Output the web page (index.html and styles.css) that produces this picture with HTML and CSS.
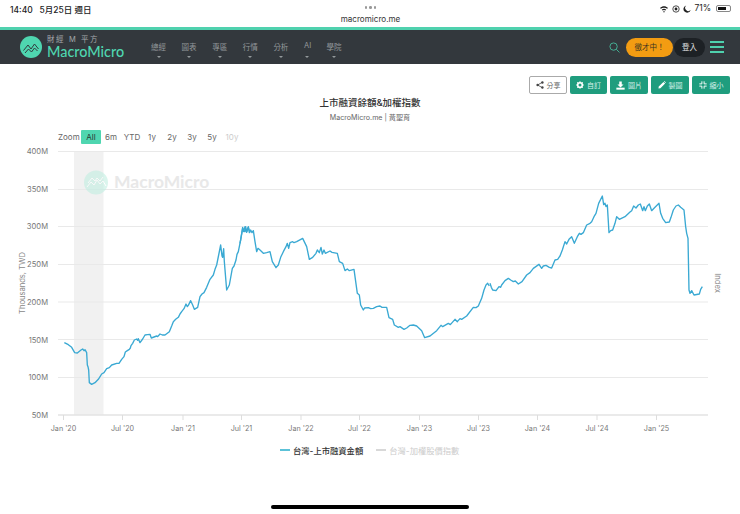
FILE: index.html
```html
<!DOCTYPE html>
<html lang="zh-Hant">
<head>
<meta charset="utf-8">
<title>上市融資餘額&amp;加權指數</title>
<link rel="stylesheet" href="styles.css">
</head>
<body>
<div class="page">
  <header class="status">
    <div class="status-left">14:40&nbsp;&nbsp; 5月25日 週日</div>
    <div class="status-mid">
      <div class="dots"><i></i><i></i><i></i></div>
      <div class="url">macromicro.me</div>
    </div>
    <div class="status-right">
      <svg class="st-icon" viewBox="0 0 12 10" width="10" height="8"><path d="M1 3.6C4 .9 8 .9 11 3.6L9.9 4.8C7.6 2.8 4.4 2.8 2.1 4.8ZM3.2 5.8C4.8 4.4 7.2 4.4 8.8 5.8L7.7 7C6.7 6.1 5.3 6.1 4.3 7ZM6 9.6 4.9 8.2C5.5 7.7 6.5 7.7 7.1 8.2Z" fill="#222"/></svg>
      <svg class="st-icon" viewBox="0 0 10 10" width="8" height="8"><circle cx="5" cy="5" r="4" fill="none" stroke="#222" stroke-width="1"/><circle cx="5" cy="5" r="1.8" fill="#222"/></svg>
      <svg class="st-icon" viewBox="0 0 10 10" width="8" height="8"><path d="M4 .6A4.6 4.6 0 1 0 9.6 6.4 4 4 0 0 1 4 .6Z" fill="#222"/></svg>
      <span>71%</span>
      <span class="battery"><span class="battery-fill"></span></span>
    </div>
  </header>

  <nav class="nav">
    <a class="logo">
      <svg class="logo-mark" viewBox="0 0 22 22" width="22" height="22"><circle cx="11" cy="11" r="11" fill="#4fd6b0"/><path d="M3.5 14.5 8 9l3 4 3.5-5 4 5M5 17l3.5-4 3 3 3-4 3 3" fill="none" stroke="#33383d" stroke-width="1"/></svg>
      <span class="logo-text">
        <span class="logo-top">財經 M 平方</span>
        <span class="logo-name">MacroMicro</span>
      </span>
    </a>
    <ul class="menu">
      <li>總經</li><li>圖表</li><li>專區</li><li>行情</li><li>分析</li><li class="short">AI</li><li>學院</li>
    </ul>
    <div class="nav-right">
      <svg class="search" viewBox="0 0 12 12" width="11" height="11"><circle cx="5" cy="5" r="4" fill="none" stroke="#46b89a" stroke-width="1"/><path d="M8 8l3.4 3.4" stroke="#46b89a" stroke-width="1"/></svg>
      <span class="hire">徵才中！</span>
      <span class="login">登入</span>
      <span class="burger"><i></i><i></i><i></i></span>
    </div>
  </nav>

  <div class="tools">
    <button class="btn btn-light"><svg viewBox="0 0 10 10" width="8" height="8"><path d="M8 1.6 2 5l6 3.4" fill="none" stroke="#444" stroke-width="1"/><circle cx="8" cy="1.8" r="1.5" fill="#444"/><circle cx="2" cy="5" r="1.5" fill="#444"/><circle cx="8" cy="8.2" r="1.5" fill="#444"/></svg>分享</button>
    <button class="btn"><svg viewBox="0 0 10 10" width="8" height="8"><circle cx="5" cy="5" r="2.9" fill="none" stroke="#fff" stroke-width="2"/><path d="M5 .2v2M5 7.8v2M.2 5h2M7.8 5h2M1.6 1.6 3 3M7 7l1.4 1.4M8.4 1.6 7 3M3 7 1.6 8.4" stroke="#fff" stroke-width="1.3"/></svg>自訂</button>
    <button class="btn"><svg viewBox="0 0 10 10" width="9" height="9"><path d="M3.6.6h2.8v3.4H8.4L5 7.2 1.6 4h2Z" fill="#fff"/><rect x=".4" y="7.4" width="9.2" height="2.2" fill="#fff"/></svg>圖片</button>
    <button class="btn"><svg viewBox="0 0 10 10" width="8" height="8"><path d="M.6 9.4.9 7 6.8 1.1 8.9 3.2 3 9.1ZM7.4.5 8 0l2 2-.5.6Z" fill="#fff"/></svg>製圖</button>
    <button class="btn"><svg viewBox="0 0 10 10" width="8" height="8"><path d="M3.6.4v3.2H.4M6.4.4v3.2h3.2M3.6 9.6V6.4H.4M6.4 9.6V6.4h3.2" fill="none" stroke="#fff" stroke-width="1.2"/></svg>縮小</button>
  </div>

  <h1 class="title">上市融資餘額&amp;加權指數</h1>
  <p class="subtitle">MacroMicro.me | 黃聖育</p>

  <div class="range">
    <span class="zoom-label">Zoom</span>
    <span class="r r-on">All</span>
    <span class="r">6m</span>
    <span class="r r-ytd">YTD</span>
    <span class="r">1y</span>
    <span class="r">2y</span>
    <span class="r">3y</span>
    <span class="r">5y</span>
    <span class="r r-off">10y</span>
  </div>

  <svg class="chart" viewBox="0 146 740 290" width="740" height="290">
    <rect x="74" y="151" width="29.5" height="264" fill="#f1f1f1"/>
    <g stroke="#e9e9e9" stroke-width="1">
      <path d="M58 151.5H708M58 189.5H708M58 226.5H708M58 264.5H708M58 302H708M58 339.5H708M58 377.5H708"/>
      <path d="M58 415H708" stroke="#e3e3e3" stroke-width="1.4"/>
      <path d="M63.5 415v5M122.5 415v5M183 415v5M241.5 415v5M301 415v5M359.5 415v5M419.5 415v5M478.5 415v5M537.5 415v5M597 415v5M656.5 415v5" stroke="#ddd"/>
    </g>
    <g opacity=".55">
      <circle cx="96" cy="182.5" r="12" fill="#bdeee0"/>
      <path d="M87 187l4-5 3 3 3-5 3 4 3-3 3 5M88 183l4-5 3 3 2-3 3 3 3-4" fill="none" stroke="#fff" stroke-width="1"/>
    </g>
    <text class="wm" x="114" y="188">MacroMicro</text>
    <g class="ylab">
      <text x="48" y="154.3">400M</text>
      <text x="48" y="192.3">350M</text>
      <text x="48" y="229.3">300M</text>
      <text x="48" y="267.3">250M</text>
      <text x="48" y="304.8">200M</text>
      <text x="48" y="342.5">150M</text>
      <text x="48" y="380">100M</text>
      <text x="48" y="417.8">50M</text>
    </g>
    <g class="xlab">
      <text x="63.5" y="431">Jan '20</text>
      <text x="122.5" y="431">Jul '20</text>
      <text x="183" y="431">Jan '21</text>
      <text x="241.5" y="431">Jul '21</text>
      <text x="301" y="431">Jan '22</text>
      <text x="359.5" y="431">Jul '22</text>
      <text x="419.5" y="431">Jan '23</text>
      <text x="478.5" y="431">Jul '23</text>
      <text x="537.5" y="431">Jan '24</text>
      <text x="597" y="431">Jul '24</text>
      <text x="656.5" y="431">Jan '25</text>
    </g>
    <text class="ytitle" transform="translate(24.5 283) rotate(-90)">Thousands, TWD</text>
    <text class="ytitle" transform="translate(714.5 283) rotate(90)">Index</text>
    <g fill="none" stroke="#3aa9d3" stroke-width="1.35" stroke-linejoin="round">
      <polyline vector-effect="non-scaling-stroke" transform="translate(0 200) scale(.33333)" points="193,428 205,434 215,442 224,458 232,459 243,450 248,447 252,452 255,449 260,458 262,495 264,500 266,510 268,548 275,553 285,548 295,538 305,522 312,518 320,506 328,503 335,495 350,490 357,490 365,478 372,470 376,456 382,452 388,448 391,444 393,437 398,430 403,420 410,417 413,421 415,416 420,428 428,417 435,405 442,404 450,403 454,414 462,411 470,408 473,410 480,402 487,405 495,405 508,395 515,378 520,365 527,358 535,352 540,342 545,335 552,326 558,312 562,320 565,316 572,302 578,315 583,328 593,322 600,290 606,282 612,278 620,262 630,238 640,225 645,208 650,195 656,165 662,135 666,168 668,172 671,146 673,185 680,270 688,255 697,205 702,198 708,180 711,163 715,155 722,120 728,82 731,92 735,95 737,80 740,97 745,82 750,98"/>
      <polyline vector-effect="non-scaling-stroke" transform="translate(240 200) scale(.33333)" points="0,130 8,85 11,95 15,80 20,95 25,80 28,98 32,90 36,98 40,92 45,125 50,155 54,145 60,150 70,160 80,158 90,155 97,185 108,203 115,195 122,172 130,155 138,140 142,130 146,145 150,128 158,125 162,128 170,125 188,115 200,140 208,178 218,172 228,160 232,150 238,158 243,142 247,162 252,150 256,160 270,153 276,157 292,160 298,185 308,190 315,212 322,207 328,212 342,208 352,280 358,285 362,315 370,330 374,324 385,323 392,326 400,325 410,320 420,318 426,322 440,322 447,353 458,358 463,375 475,382 480,380 492,388 500,384 510,376 520,375 530,378 545,392 554,413 570,408 590,392 603,376 608,380 625,370 631,374 645,358 652,365 660,356 665,358 680,348 700,322 708,323 715,318 725,295 732,270 738,255 743,250 748,258"/>
      <polyline vector-effect="non-scaling-stroke" transform="translate(490 180) scale(.33333)" points="0,310 4,322 8,330 18,332 27,320 32,322 35,315 45,302 55,295 62,300 70,305 76,303 85,312 96,305 110,285 120,278 130,265 147,253 155,265 160,258 168,256 178,262 185,264 195,240 203,238 207,232 210,228 217,210 225,185 230,192 237,178 245,170 253,190 262,170 268,160 273,163 280,158 290,135 300,130 305,125 312,110 318,100 326,70 337,48 341,74 345,70 348,80 352,75 357,158 362,152 368,150 375,130 380,110 388,118 405,110 420,96 425,92 431,78 438,84 445,75 451,72 458,92 462,80 466,92 472,78 478,72 485,92 495,82 507,70 512,100 518,115 527,128 538,126 543,112 550,90 558,78 565,75 572,82 582,90 587,140 590,160 594,175 597,330 600,340 605,332 612,345 628,342 632,328 637,320"/>
    </g>
  </svg>

  <div class="legend">
    <span class="key key-on"></span><span class="leg-on">台灣-上市融資金額</span>
    <span class="key key-off"></span><span class="leg-off">台灣-加權股價指數</span>
  </div>
  <div class="home"></div>
</div>
</body>
</html>
```
FILE: styles.css
```css
* { box-sizing: border-box; }
html, body { margin: 0; padding: 0; background: #fff; }
body { font-family: Inter, "Noto Sans CJK TC", sans-serif; color: #333; }
.page { position: relative; width: 740px; height: 514px; overflow: hidden; }

.status { height: 27px; display: grid; grid-template-columns: 1fr auto 1fr; padding: 2px 9px 0 10px; font-size: 8.5px; color: #222; }
.status-left { padding-top: 1px; font-weight: 500; }
.status-mid { display: flex; flex-direction: column; align-items: center; }
.dots { display: flex; gap: 2px; height: 10px; padding-top: 4px; }
.dots i { width: 2.5px; height: 2.5px; border-radius: 50%; background: #999; }
.url { font-size: 8.1px; line-height: 14px; color: #333; }
.status-right { display: flex; justify-content: flex-end; align-items: flex-start; gap: 3px; padding-top: 1px; }
.st-icon { margin-top: 2px; }
.battery { width: 15px; height: 7px; margin: 2px 0 0 2px; border: 1px solid #888; border-radius: 2px; padding: 1px; display: block; }
.battery-fill { display: block; width: 70%; height: 100%; background: #111; }

.nav { height: 37px; background: #33383d; border-top: 3px solid #4fd1ae; display: flex; align-items: center; padding: 0 16px 0 20px; }
.logo { display: flex; align-items: center; gap: 5px; width: 131px; }
.logo-text { display: flex; flex-direction: column; gap: 1px; }
.logo-top { font-size: 7.5px; line-height: 8px; letter-spacing: 1.6px; color: #a4a8ab; }
.logo-name { font-family: "Lato", sans-serif; font-size: 14.4px; line-height: 13px; font-weight: 500; color: #4fd6b0; }
.menu { display: flex; list-style: none; margin: 0 0 1px; padding: 0; gap: 15.6px; }
.menu li { position: relative; font-size: 7.5px; color: #94999c; width: 15px; text-align: center; white-space: nowrap; }
.menu li.short { width: 7px; }
.menu li::after { content: ""; position: absolute; left: 50%; bottom: -6px; margin-left: -2px; border: 2px solid transparent; border-top: 2.5px solid #94999c; border-bottom: 0; }
.nav-right { margin-left: auto; display: flex; align-items: center; }
.search { margin-right: 6px; }
.hire { width: 47px; height: 19px; border-radius: 10px; background: #f39c12; color: #3a3320; font-size: 7.5px; line-height: 19px; text-align: center; }
.login { width: 31px; height: 19px; margin-left: 1px; border-radius: 10px; background: #1d2125; color: #e4e4e4; font-size: 7.5px; line-height: 19px; text-align: center; }
.burger { width: 14px; margin-left: 5px; display: flex; flex-direction: column; gap: 3.7px; }
.burger i { display: block; height: 1.4px; background: #4fd1ae; }

.tools { display: flex; justify-content: flex-end; gap: 3px; padding: 12px 10px 0 0; }
.btn { width: 37px; height: 18px; padding: 0; border: 0; border-radius: 2px; background: #1f9d7e; color: #d9f1ea; font-family: inherit; font-size: 7px; display: flex; align-items: center; justify-content: center; gap: 3px; }
.btn:nth-child(3), .btn:nth-child(4), .btn:nth-child(5) { width: 38px; }
.btn-light { background: #fff; color: #666; border: 1px solid #aaa; width: 38px; }

.title { margin: 2px 0 0; text-align: center; font-size: 9.5px; line-height: 14px; font-weight: 500; color: #333; }
.subtitle { margin: 2px 0 0; text-align: center; font-size: 7.1px; line-height: 11px; color: #666; }

.range { display: flex; align-items: center; height: 14px; margin: 7px 0 2px; padding-left: 58px; font-size: 8px; color: #666; }
.zoom-label { width: 23px; }
.r { width: 20px; text-align: center; line-height: 14px; }
.r-on { background: #4fd6b0; color: #2a3a36; border-radius: 1px; }
.r-ytd { margin-left: 1px; }
.r-off { color: #ccc; }

.chart { display: block; }
.chart text { font-family: Inter, sans-serif; }
.ylab text { font-size: 7.6px; fill: #777; text-anchor: end; }
.xlab text { font-size: 7.2px; fill: #777; text-anchor: middle; }
.ytitle { font-size: 7.6px; fill: #888; text-anchor: middle; }
.chart .wm { font-family: Lato, sans-serif; font-size: 17.5px; font-weight: 700; fill: #e8e8e8; }

.legend { display: flex; align-items: center; margin-top: 8px; padding-left: 280px; height: 12px; font-size: 8.3px; }
.key { width: 10px; height: 1.5px; margin-right: 3px; }
.key-on { background: #5cc2d8; }
.key-off { background: #d8d8d8; margin-left: 13px; }
.leg-on { color: #333; font-weight: 500; }
.leg-off { color: #ccc; }

.home { position: absolute; left: 271px; top: 505px; width: 198px; height: 4px; border-radius: 2px; background: #000; }
```
